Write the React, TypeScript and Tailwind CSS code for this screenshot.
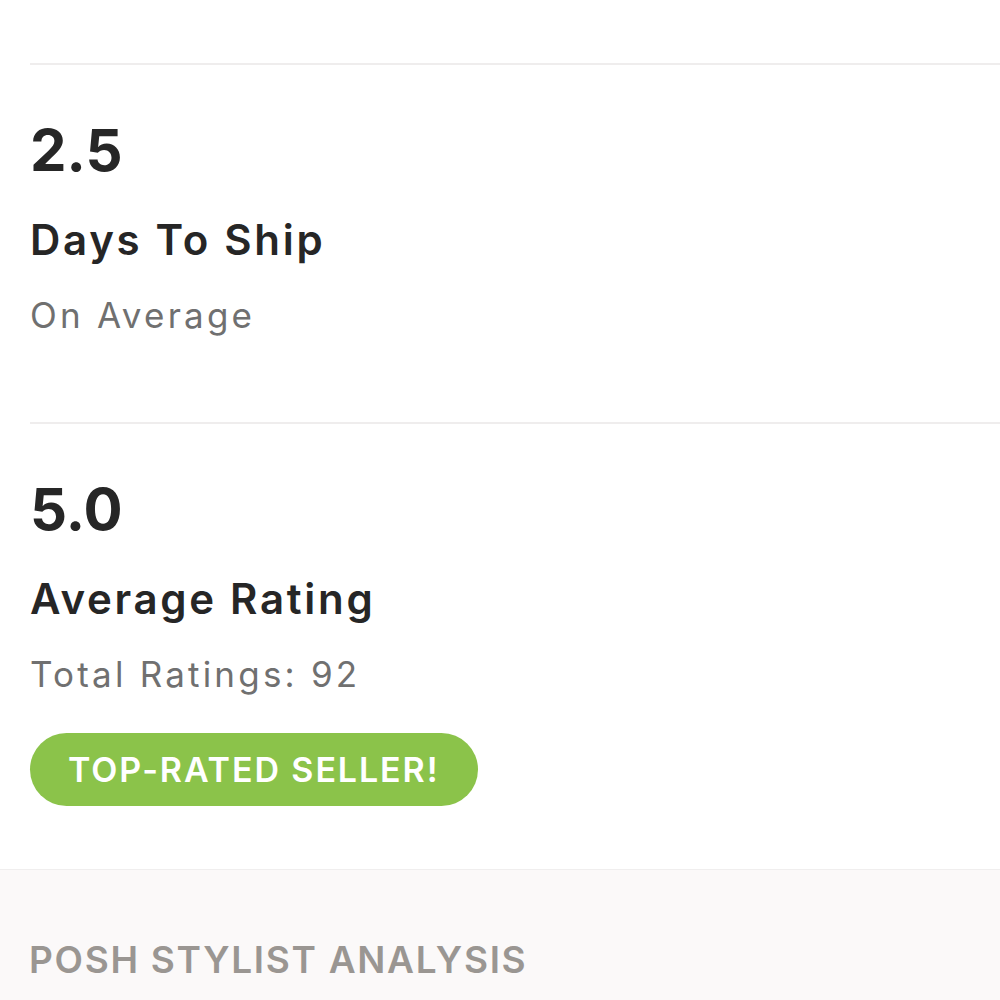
import React from "react";

const stats = [
  { value: "2.5", title: "Days To Ship", sub: "On Average" },
  { value: "5.0", title: "Average Rating", sub: "Total Ratings: 92", badge: "TOP-RATED SELLER!" },
];

const StatBlock = ({
  value,
  title,
  sub,
  badge,
}: {
  value: string;
  title: string;
  sub: string;
  badge?: string;
}) => (
  <div className="border-t-2 border-[#efeded] pt-[56px]">
    <div className="text-[58px] leading-none font-bold text-[#262626]">{value}</div>
    <div className="mt-[40px] text-[42px] leading-none font-semibold tracking-[2.7px] text-[#262626]">
      {title}
    </div>
    <div className="mt-[37px] text-[35px] leading-none tracking-[3.2px] text-[#707070]">{sub}</div>
    {badge ? (
      <div className="mt-[41px] mb-[63px] inline-flex h-[73px] items-center rounded-full bg-[#8bc34a] px-[38px] text-[34px] font-semibold tracking-[1.9px] text-white">
        {badge}
      </div>
    ) : (
      <div className="h-[89px]" />
    )}
  </div>
);

export default function App() {
  return (
    <div className="h-[1000px] w-full overflow-hidden bg-white font-['Inter',sans-serif]">
      <div className="pt-[63px] pl-[30px]">
        {stats.map((s) => (
          <StatBlock key={s.value} {...s} />
        ))}
      </div>
      <div className="border-t border-[#f0eeee] bg-[#fbf9f9] pl-[29px] pt-[71px] h-[200px]">
        <div className="text-[37px] leading-none font-semibold tracking-[1.7px] text-[#9a9692]">
          POSH STYLIST ANALYSIS
        </div>
      </div>
    </div>
  );
}
